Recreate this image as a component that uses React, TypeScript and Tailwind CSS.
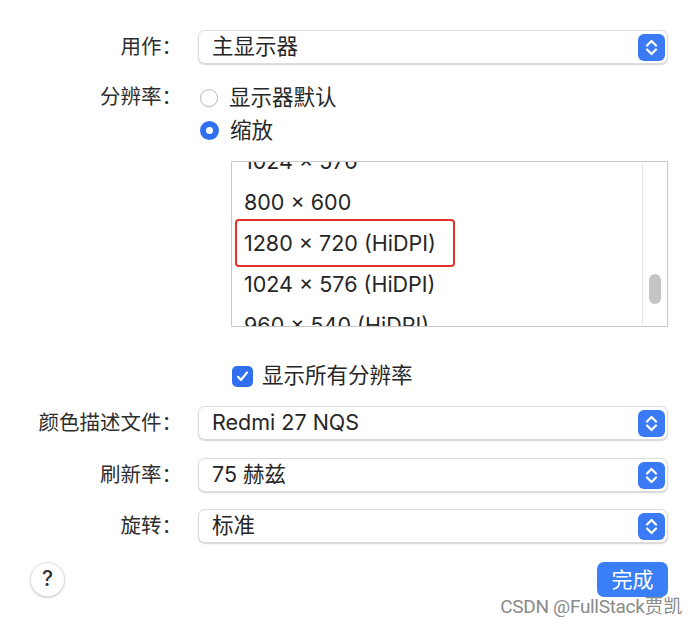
const cjk = "font-['Inter','Noto_Sans_CJK_SC',sans-serif]"

function Stepper() {
  return (
    <span className="flex h-[27px] w-[27px] items-center justify-center rounded-[6px] bg-[#3a7af5]">
      <svg width="27" height="27" viewBox="0 0 27 27" fill="none">
        <path d="M9 11.5l4.5-4.5 4.5 4.5" stroke="white" strokeWidth="2.2" strokeLinecap="round" strokeLinejoin="round" />
        <path d="M9 15.5l4.5 4.5 4.5-4.5" stroke="white" strokeWidth="2.2" strokeLinecap="round" strokeLinejoin="round" />
      </svg>
    </span>
  )
}

function Popup({ value }: { value: string }) {
  return (
    <div className="flex h-[34px] items-center justify-between rounded-[7px] border border-[#dcdcdc] bg-white pl-[13px] pr-[2px] shadow-[0_1px_1.5px_rgba(0,0,0,0.18)]">
      <span className="text-[21.5px] leading-none text-[#262626]">{value}</span>
      <Stepper />
    </div>
  )
}

function Label({ children }: { children: string }) {
  return (
    <div className="flex h-[34px] items-center justify-end text-[20.5px] leading-none text-[#2e2e2e]">
      {children}
    </div>
  )
}

const resolutions = ['1024 × 576', '800 × 600', '1280 × 720 (HiDPI)', '1024 × 576 (HiDPI)', '960 × 540 (HiDPI)']

export default function App() {
  return (
    <div className={`${cjk} h-[627px] w-[697px] overflow-hidden bg-white pt-[30px]`}>
      <div className="grid grid-cols-[182px_1fr] gap-x-[16px] pr-[29px]">
        <Label>用作：</Label>
        <Popup value="主显示器" />

        <div className="mt-[17px] flex h-[33px] items-center justify-end text-[20.5px] leading-none text-[#2e2e2e]">
          分辨率：
        </div>
        <div className="mt-[17px]">
          <div className="flex h-[33px] items-center gap-[11px] pl-[2px]">
            <span className="h-[18px] w-[18px] rounded-full border border-[#bfbfbf] bg-white shadow-[0_0.5px_1px_rgba(0,0,0,0.1)]" />
            <span className="text-[21.5px] leading-none text-[#262626]">显示器默认</span>
          </div>
          <div className="flex h-[33px] items-center gap-[11px] pl-[2px]">
            <span className="flex h-[19px] w-[19px] items-center justify-center rounded-full bg-[#2f6ff0]">
              <span className="h-[7px] w-[7px] rounded-full bg-white" />
            </span>
            <span className="text-[21.5px] leading-none text-[#262626]">缩放</span>
          </div>

          <div className="ml-[33px] mt-[14px] flex h-[166px] overflow-hidden border border-[#c9c9c9] bg-white">
            <div className="flex-1 overflow-hidden">
              <div className="mt-[-21px]">
                {resolutions.map((r, i) => (
                  <div key={r} className="relative flex h-[41px] items-center pl-[12px] text-[21.5px] leading-none text-[#262626]">
                    {r}
                    {i === 2 && (
                      <span className="absolute left-[3px] top-[-4px] h-[48px] w-[220px] rounded-[4px] border-2 border-[#e2332b]" />
                    )}
                  </div>
                ))}
              </div>
            </div>
            <div className="flex w-[25px] justify-center border-l border-[#e6e6e6] pt-[112px]">
              <span className="h-[30px] w-[12px] rounded-full bg-[#c4c4c4]" />
            </div>
          </div>

          <div className="ml-[34px] mt-[38px] flex h-[22px] items-center gap-[9px]">
            <span className="flex h-[21px] w-[21px] items-center justify-center rounded-[5px] bg-[#2f6ff0]">
              <svg width="15" height="15" viewBox="0 0 15 15" fill="none">
                <path d="M3 7.8l3 3.2 6-7.5" stroke="white" strokeWidth="2.2" strokeLinecap="round" strokeLinejoin="round" />
              </svg>
            </span>
            <span className="text-[21.5px] leading-none text-[#262626]">显示所有分辨率</span>
          </div>
        </div>

        <div className="mt-[19px]"><Label>颜色描述文件：</Label></div>
        <div className="mt-[19px]"><Popup value="Redmi 27 NQS" /></div>

        <div className="mt-[18px]"><Label>刷新率：</Label></div>
        <div className="mt-[18px]"><Popup value="75 赫兹" /></div>

        <div className="mt-[17px]"><Label>旋转：</Label></div>
        <div className="mt-[17px]"><Popup value="标准" /></div>
      </div>

      <div className="mt-[18px] flex items-center justify-between pl-[30px] pr-[29px]">
        <span className="flex h-[35px] w-[35px] items-center justify-center rounded-full border border-[#e0e0e0] bg-white text-[21px] font-medium text-[#333] shadow-[0_1px_2px_rgba(0,0,0,0.2)]">
          ?
        </span>
        <button className="mt-[1px] h-[35px] w-[71px] rounded-[7px] bg-[#3b7ff6] text-[21px] leading-none text-white">
          完成
        </button>
      </div>
      <div className="flex justify-end pr-[15px] font-['Roboto','Noto_Sans_CJK_SC',sans-serif] text-[19px] leading-[20px] tracking-[-0.3px] text-[#8a8a8a]">
        CSDN @FullStack贾凯
      </div>
    </div>
  )
}
